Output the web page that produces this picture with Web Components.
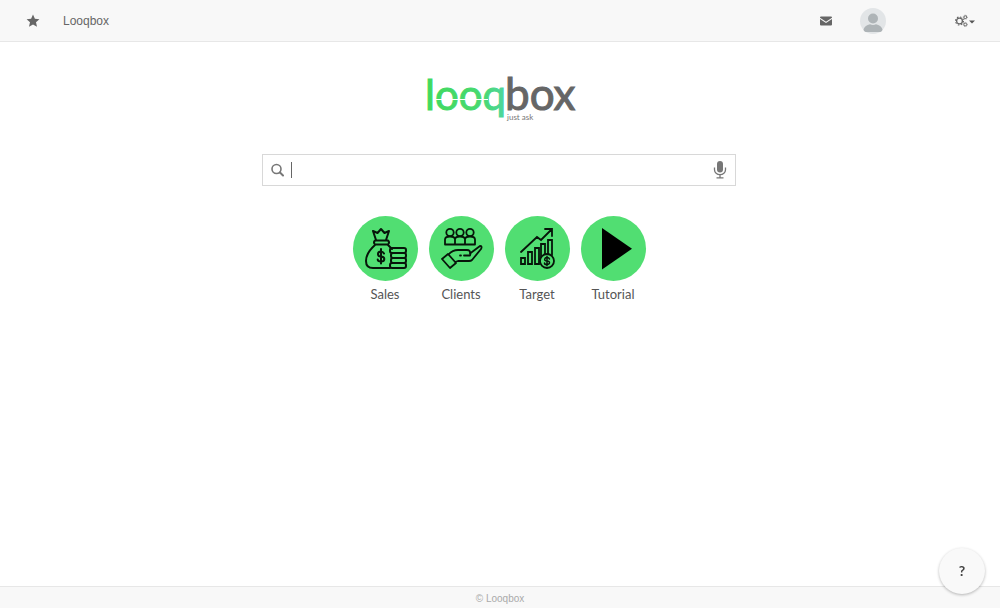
<!DOCTYPE html>
<html lang="en">
<head>
<meta charset="utf-8">
<title>Looqbox</title>
<style>
html,body{margin:0;height:100%;background:#fff}
body{font-family:"Liberation Sans",Arial,sans-serif;color:#666}
</style>
</head>
<body>
<looq-app></looq-app>
<script>
const define = (name, html) => customElements.define(name, class extends HTMLElement {
  constructor() {
    super();
    const t = document.createElement('template');
    t.innerHTML = html;
    this.attachShadow({mode: 'open'}).append(t.content.cloneNode(true));
  }
});

define('looq-header', `
<style>
:host{display:block}
header{display:flex;align-items:center;height:41px;padding:0 25px;background:#f8f8f8;border-bottom:1px solid #e7e7e7}
button,a{display:flex;align-items:center;justify-content:center;border:0;padding:0;background:none;color:#666;font:12px/16px "Liberation Sans",Arial,sans-serif;text-decoration:none}
svg{display:block}
.star{width:16px;margin-right:22px}
.right{display:flex;align-items:center;margin-left:auto}
.mail{margin-right:28px}
.user{margin-right:68px}
</style>
<header>
<button class="star" aria-label="Favourites"><svg width="14" height="14" viewBox="0 0 14 14"><path fill="#666" d="M7 .6 8.900 4.700 13.400 5.200 10 8.200 11 12.800 7 10.500 3 12.800 4 8.200.6 5.200 5.100 4.700Z"/></svg></button>
<a href="#">Looqbox</a>
<nav class="right">
<button class="mail" aria-label="Messages"><svg width="12" height="10" viewBox="0 0 12 10"><path fill="#666" d="M1 .5h10q1 0 1 1v.3L6 5.800 0 1.800v-.3q0-1 1-1ZM0 3.100l6 3.900 6-3.900v5.400q0 1-1 1H1q-1 0-1-1Z"/></svg></button>
<button class="user" aria-label="Profile"><svg width="26" height="26" viewBox="0 0 26 26"><circle cx="13" cy="13" r="13" fill="#e2e5e7"/><circle cx="13" cy="10.500" r="5" fill="#aeb4b7"/><path fill="#aeb4b7" d="M3.500 21.400Q5 17.200 10 16.300q3 1.500 6 0 5 .9 6.500 5.100Q22 24 19 24H7Q4 24 3.500 21.400Z"/></svg></button>
<button aria-label="Settings"><svg width="21" height="14" viewBox="0 0 21 14"><g fill="none" stroke="#666"><circle cx="5.500" cy="7" r="2.900" stroke-width="1.300"/><circle cx="5.500" cy="7" r="4" stroke-width="1.100" stroke-dasharray="1.570 1.570"/><circle cx="11.300" cy="3.200" r="1.400" stroke-width="1"/><circle cx="11.300" cy="3.200" r="2.100" stroke-width=".6" stroke-dasharray=".82 .82"/><circle cx="11.300" cy="10.500" r="1.400" stroke-width="1"/><circle cx="11.300" cy="10.500" r="2.100" stroke-width=".6" stroke-dasharray=".82 .82"/></g><path fill="#555" d="M15 6.500h6l-3 3Z"/></svg></button>
</nav>
</header>`);

define('looq-logo', `
<style>
:host{display:block}
svg{display:block;overflow:visible}
text{font-family:Lato,sans-serif}
</style>
<svg width="152" height="52" viewBox="0 0 152 52" role="img" aria-label="looqbox, just ask">
<defs><linearGradient id="g" x1="0" x2="1"><stop offset="0" stop-color="#40d95e"/><stop offset=".7" stop-color="#48d970"/><stop offset="1" stop-color="#4fd5a0"/></linearGradient></defs>
<text x="2" y="37" font-size="42" fill="url(#g)" stroke="url(#g)" stroke-width="1">looq</text>
<text x="82" y="37" font-size="44" fill="#666" stroke="#666" stroke-width="1">box</text>
<path stroke="#fff" stroke-width="1" d="M11 26.500h54"/>
<text x="84" y="47" font-size="8" fill="#777">just ask</text>
</svg>`);

define('looq-search', `
<style>
:host{display:block;width:474px;max-width:90%}
form{display:flex;align-items:center;height:30px;margin:0;border:1px solid #d8d8d8;background:#fff;padding:0 8px}
.caret{width:1px;height:16px;background:#666;margin-left:7px}
input{flex:1;min-width:0;border:0;outline:0;background:none;padding:0 4px;font:14px "Liberation Sans",Arial,sans-serif;color:#555}
button{border:0;padding:0;background:none}
svg{display:block}
</style>
<form>
<svg width="13" height="14" viewBox="0 0 13 14"><g fill="none" stroke="#777"><circle cx="5.500" cy="6" r="4.500" stroke-width="1.600"/><path stroke-width="2" stroke-linecap="round" d="m9 9.500 3 3"/></g></svg>
<span class="caret"></span>
<input type="text" aria-label="Search">
<button type="button" aria-label="Voice search"><svg width="14" height="18" viewBox="0 0 14 18"><rect x="4" y="0" width="6" height="11.500" rx="3" fill="#777"/><path fill="none" stroke="#777" stroke-width="1.300" d="M1.500 6.500v2.200a5.500 5 0 0 0 11 0V6.500M7 13.500v3M3.500 16.800h7"/></svg></button>
</form>`);

define('looq-shortcut', `
<style>
:host{display:block}
a{display:flex;flex-direction:column;align-items:center;gap:4px;width:65px;color:#555;text-decoration:none;font:13px/18px Lato,sans-serif}
.disc{display:block;width:65px;height:65px;border-radius:50%;background:#51de72}
</style>
<a href="#"><span class="disc"><slot name="icon"></slot></span><slot></slot></a>`);

define('looq-help', `
<style>
:host{position:fixed;right:15px;bottom:14px;z-index:2}
button{display:block;width:46px;height:46px;border:0;border-radius:50%;padding:0;background:#f9f9f9;box-shadow:0 1px 3px rgba(0,0,0,.28);color:#444;font:bold 14px/46px Lato,sans-serif}
</style>
<button aria-label="Help">?</button>`);

define('looq-footer', `
<style>
:host{display:block}
footer{height:21px;border-top:1px solid #e7e7e7;background:#f8f8f8;text-align:center;color:#aaa;font:10px/24px "Liberation Sans",Arial,sans-serif}
</style>
<footer>© Looqbox</footer>`);

define('looq-app', `
<style>
:host{display:flex;flex-direction:column;min-height:100vh}
main{flex:1;display:flex;flex-direction:column;align-items:center;padding:31px 2px 0 0}
looq-search{margin-top:29px}
.shortcuts{display:flex;flex-wrap:wrap;justify-content:center;gap:11px;margin-top:30px}
svg{display:block}
.line{fill:none;stroke:#07150a;stroke-width:2;stroke-linejoin:round;stroke-linecap:round}
</style>
<looq-header></looq-header>
<main>
<looq-logo></looq-logo>
<looq-search></looq-search>
<nav class="shortcuts">
<looq-shortcut><svg slot="icon" width="65" height="65" viewBox="0 0 65 65"><g class="line"><path d="M23 24 20 15l4.500 2L28 13l3.500 4 4.500-2-3 9M22 24.500h13q2 2 0 4H22q-2-2 0-4ZM22 29q-9 8-9 16 0 7 7 7h17M35 29l4 4"/><rect x="37" y="32" width="16" height="5" rx="2"/><rect x="38" y="37" width="15" height="5" rx="2"/><rect x="38" y="42" width="15" height="5" rx="2"/><rect x="37" y="47" width="16" height="5" rx="2"/></g><path class="line" d="M31 37.500q-1-2-3.300-2-2.700 0-2.700 2.500t3 2.500q3.300 0 3.300 2.500t-3.300 2.500-3.300-2M28 33v14.500"/></svg>Sales</looq-shortcut>
<looq-shortcut><svg slot="icon" width="65" height="65" viewBox="0 0 65 65"><g class="line" style="stroke-width:1.800"><circle cx="21" cy="16.500" r="3.700"/><circle cx="31" cy="16.500" r="3.700"/><circle cx="41" cy="16.500" r="3.700"/><path d="M16 28.500v-5q0-3 5-3t5 3v5ZM26 28.500v-5q0-3 5-3t5 3v5ZM36 28.500v-5q0-3 5-3t5 3v5ZM13 43l6-5 8 9-6 5ZM19.500 38.500q4-4.500 9.500-4.500h9q3.500 0 3 3.500L51 30q2.500 0 1 3L43 44q-1 1-3 1H29l-3 1M31 39.500h1M35 39.500h6l.5-2"/></g></svg>Clients</looq-shortcut>
<looq-shortcut><svg slot="icon" width="65" height="65" viewBox="0 0 65 65"><g class="line" style="stroke-width:1.800;stroke-linejoin:miter"><path d="m16 36 16-15 4 3 11-11M40 13h7v7M16 42h4v6h-4ZM23 36h4v12h-4ZM30 32h4v16h-4ZM36 41v-13h4v10M43 38v-14h4v15"/><circle cx="42" cy="45" r="7" fill="#51de72"/><path d="M44.500 43q-.5-1.500-2.500-1.500T39.700 43.200t2.300 1.800 2.500 1.800-2.500 1.800-2.500-1.500M42 40.200v9.600" style="stroke-width:1.500"/></g></svg>Target</looq-shortcut>
<looq-shortcut><svg slot="icon" width="65" height="65" viewBox="0 0 65 65"><path d="M21 12v41.500l30-20.700Z" fill="#000"/></svg>Tutorial</looq-shortcut>
</nav>
</main>
<looq-footer></looq-footer>
<looq-help></looq-help>`);
</script>
</body>
</html>
